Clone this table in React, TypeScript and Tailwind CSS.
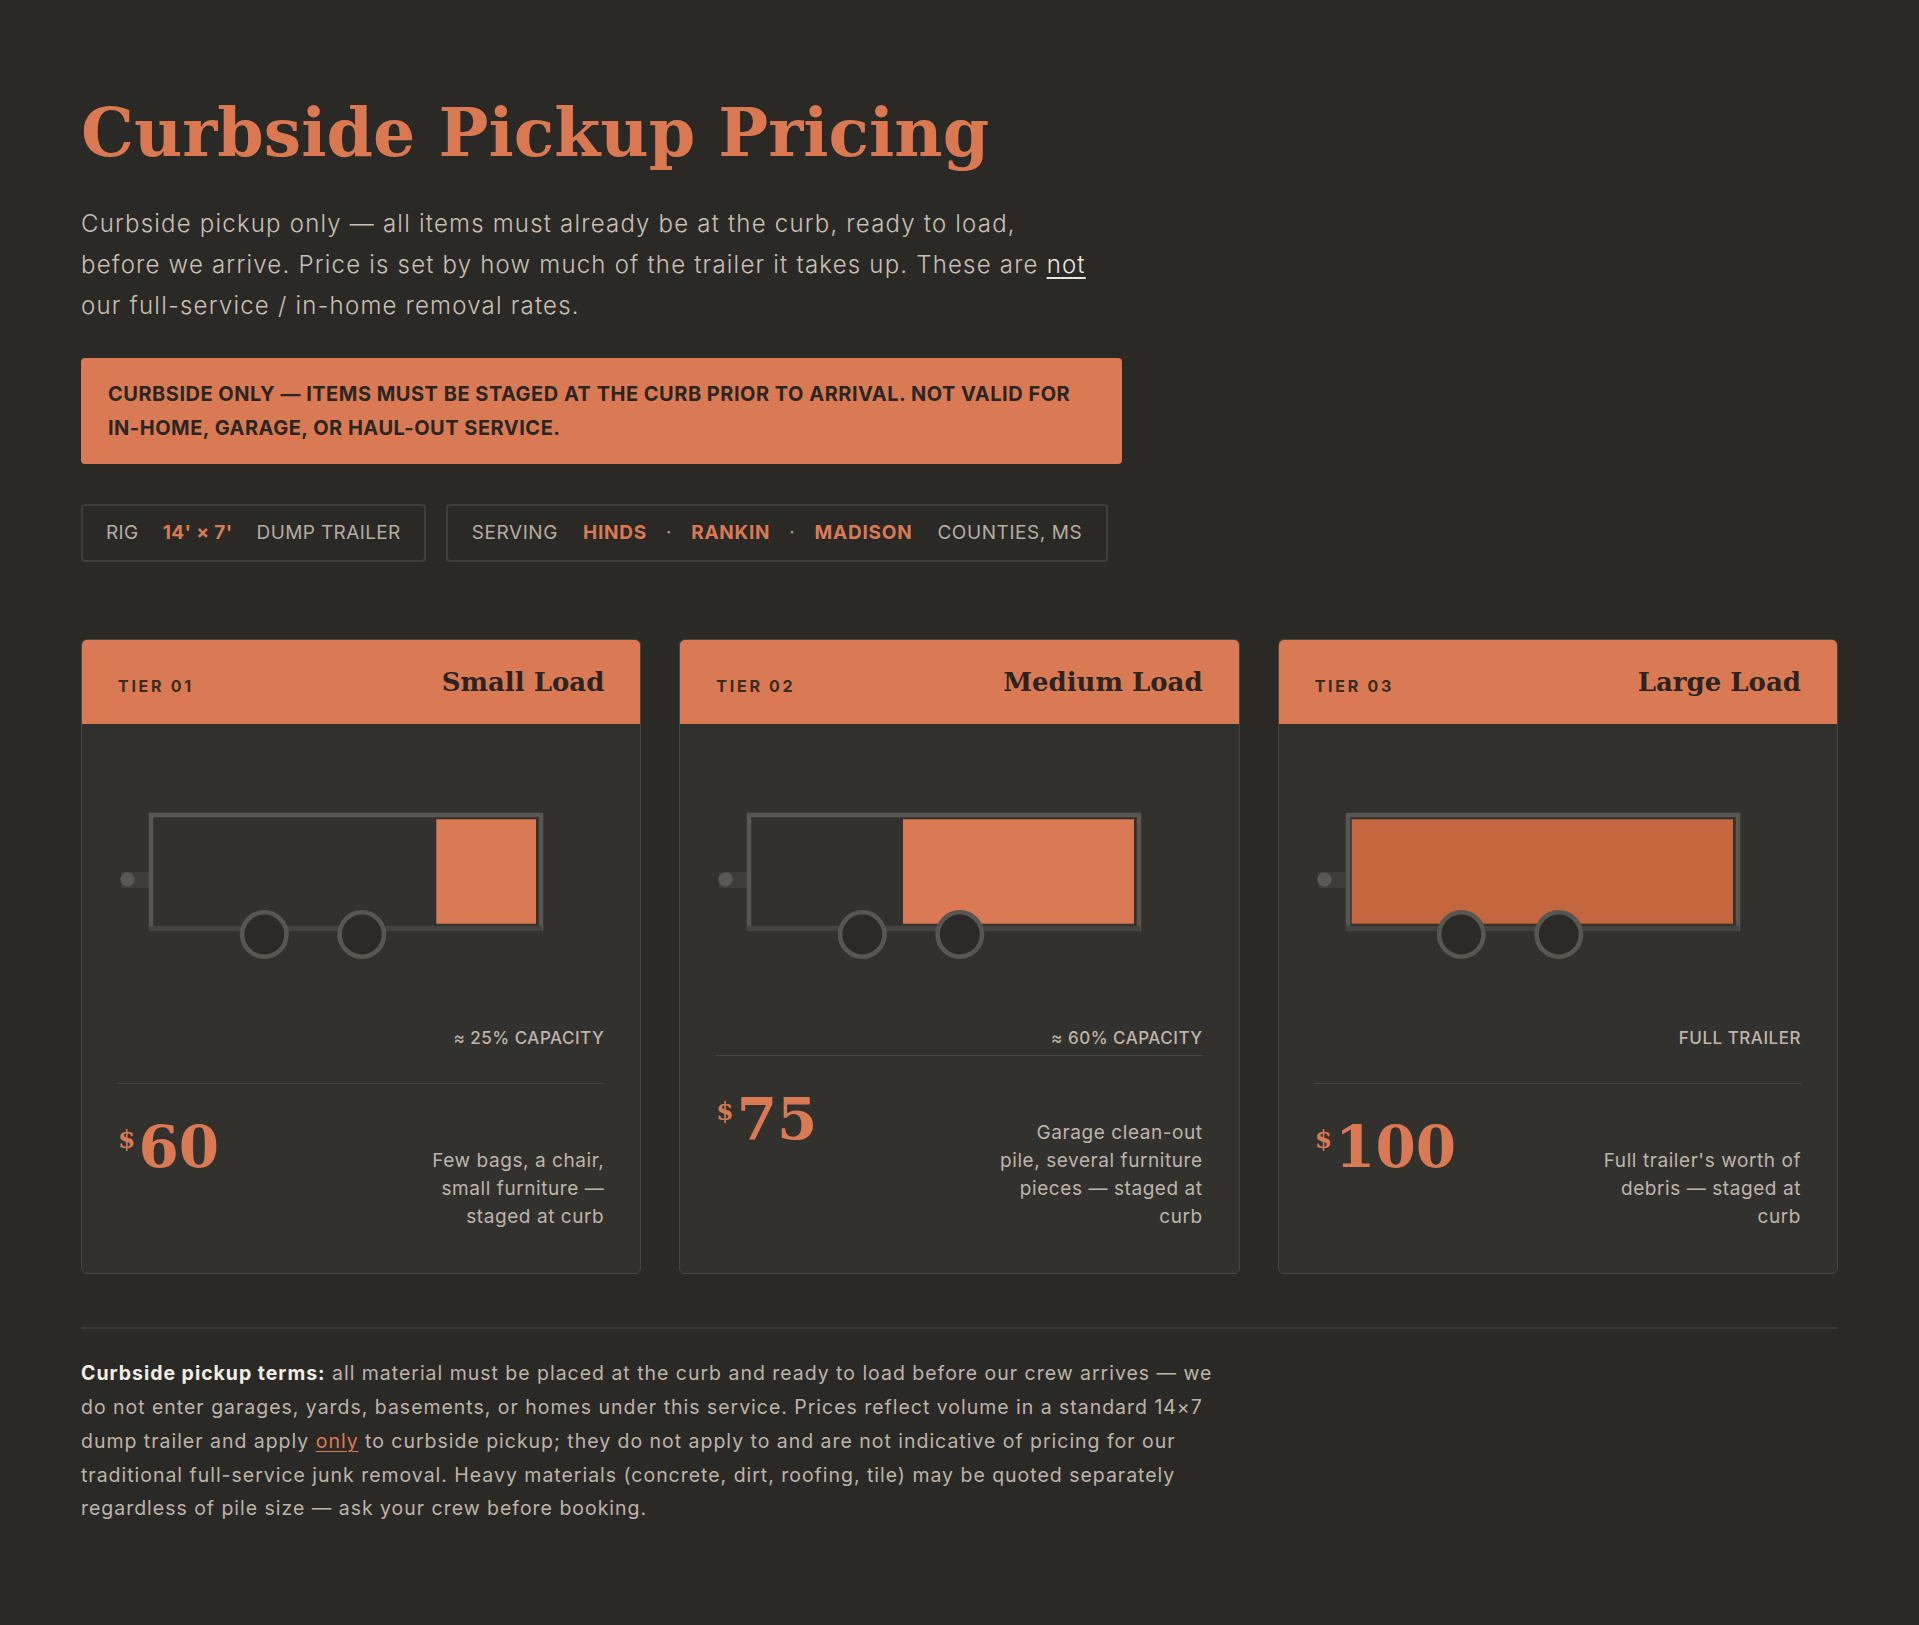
import React from "react";

const SANS = "font-['Inter','Open_Sans',sans-serif]";
const SERIF = "font-['DejaVu_Serif','Liberation_Serif',serif]";

function Trailer({ fillX, fillW, color }: { fillX: number; fillW: number; color: string }) {
  return (
    <svg width="430" height="160" viewBox="0 0 430 160" className="block">
      <rect x="3" y="72" width="30" height="16" fill="#3e3c39" />
      <circle cx="9.5" cy="79.5" r="7.2" fill="#5a5854" />
      <rect x="33" y="15" width="390" height="113.5" fill="none" stroke="#585651" strokeWidth="4.5" />
      <rect x={fillX} y="19.3" width={fillW} height="104.4" fill={color} />
      <rect x="31" y="125.8" width="393" height="5" fill="#454340" />
      <circle cx="146.3" cy="134.5" r="22.2" fill="#2b2a26" stroke="#585651" strokeWidth="4.6" />
      <circle cx="243.8" cy="134.5" r="22.2" fill="#2b2a26" stroke="#585651" strokeWidth="4.6" />
    </svg>
  );
}

type Tier = {
  tier: string;
  name: string;
  fillX: number;
  fillW: number;
  color: string;
  label: string;
  price: string;
  desc: string[];
};

const tiers: Tier[] = [
  {
    tier: "TIER 01",
    name: "Small Load",
    fillX: 318.3,
    fillW: 99.7,
    color: "#d97a55",
    label: "≈ 25% CAPACITY",
    price: "60",
    desc: ["Few bags, a chair,", "small furniture —", "staged at curb"],
  },
  {
    tier: "TIER 02",
    name: "Medium Load",
    fillX: 187,
    fillW: 231,
    color: "#d97a55",
    label: "≈ 60% CAPACITY",
    price: "75",
    desc: ["Garage clean-out", "pile, several furniture", "pieces — staged at", "curb"],
  },
  {
    tier: "TIER 03",
    name: "Large Load",
    fillX: 36.7,
    fillW: 381.3,
    color: "#c4673f",
    label: "FULL TRAILER",
    price: "100",
    desc: ["Full trailer's worth of", "debris — staged at", "curb"],
  },
];

function Card({ t }: { t: Tier }) {
  return (
    <div className="flex flex-col overflow-hidden rounded-[6px] border border-[#48453f] bg-[#33312e]">
      <div className="flex h-[84px] items-center justify-between bg-[#d97a55] px-9">
        <span className={`${SANS} relative top-[4px] text-[16px] font-bold tracking-[0.17em] text-[#3a2b23]`}>
          {t.tier}
        </span>
        <span className={`${SERIF} text-[26px] font-bold text-[#2b2420]`}>{t.name}</span>
      </div>
      <div className="flex flex-1 flex-col px-9">
        <div className="pt-[76px]">
          <Trailer fillX={t.fillX} fillW={t.fillW} color={t.color} />
        </div>
        <div
          className={`${SANS} mt-[66px] mb-[5px] text-right text-[17px] font-medium uppercase leading-6 tracking-[0.03em] text-[#beb6ac]`}
        >
          {t.label}
        </div>
        <div className="mt-auto flex items-baseline justify-between border-t border-[#4a4743] pt-[34px] pb-[42px]">
          <div className={`${SERIF} text-[58px] font-bold leading-none text-[#d97a55]`}>
            <span className="relative top-[9px] mr-[3px] align-top text-[25px]">$</span>
            {t.price}
          </div>
          <div className={`${SANS} text-right text-[19px] leading-[28px] tracking-[0.03em] text-[#bdb5ab]`}>
            {t.desc.map((d, i) => (
              <React.Fragment key={i}>
                {d}
                {i < t.desc.length - 1 && <br />}
              </React.Fragment>
            ))}
          </div>
        </div>
      </div>
    </div>
  );
}

export default function App() {
  return (
    <div className={`min-h-[1625px] w-full bg-[#2b2926] px-[81px] pt-[97px] pb-20 ${SANS}`}>
      <h1 className={`${SERIF} m-0 text-[66.5px] font-bold leading-[1.1] text-[#da7852]`}>Curbside Pickup Pricing</h1>

      <p className="mt-[33px] text-[24px] font-light leading-[41px] tracking-[0.05em] text-[#c8c0b6]">
        Curbside pickup only — all items must already be at the curb, ready to load,
        <br />
        before we arrive. Price is set by how much of the trailer it takes up. These are{" "}
        <span className="text-[#ece6de] underline decoration-[1.5px] underline-offset-[4px]">not</span>
        <br />
        our full-service / in-home removal rates.
      </p>

      <div className="mt-[32px] w-[1041px] rounded-[4px] bg-[#d97a55] px-[27px] py-[19px] text-[20px] font-bold uppercase leading-[34px] tracking-[0.025em] text-[#2b2622]">
        Curbside only — items must be staged at the curb prior to arrival. Not valid for
        <br />
        in-home, garage, or haul-out service.
      </div>

      <div className="mt-10 flex gap-[20px]">
        <div className="flex h-[58px] items-center gap-[24px] rounded-[4px] border-2 border-[#403e3a] px-[23px] text-[19px] uppercase tracking-[0.02em]">
          <span className="text-[#b5ada3]">Rig</span>
          <span className="font-bold text-[#d97a55]">14' × 7'</span>
          <span className="text-[#b5ada3]">Dump trailer</span>
        </div>
        <div className="flex h-[58px] items-center gap-[25px] rounded-[4px] border-2 border-[#403e3a] px-6 text-[19px] uppercase tracking-[0.03em]">
          <span className="text-[#b5ada3]">Serving</span>
          <span className="font-bold tracking-[0.04em] text-[#d97a55]">
            Hinds<span className="mx-[19px] font-normal text-[#a39b91]">·</span>Rankin
            <span className="mx-[19px] font-normal text-[#a39b91]">·</span>Madison
          </span>
          <span className="text-[#b5ada3]">Counties, MS</span>
        </div>
      </div>

      <div className="mt-[77px] grid grid-cols-3 gap-[38px]">
        {tiers.map((t) => (
          <Card key={t.tier} t={t} />
        ))}
      </div>

      <div className="mt-[53px] border-t-2 border-[#3b3935]" />

      <p className="mt-[28px] text-[19.5px] leading-[33.8px] tracking-[0.05em] text-[#bcb4aa]">
        <strong className="font-bold text-[#f3eee8]">Curbside pickup terms:</strong> all material must be placed at the
        curb and ready to load before our crew arrives — we
        <br />
        do not enter garages, yards, basements, or homes under this service. Prices reflect volume in a standard 14×7
        <br />
        dump trailer and apply{" "}
        <span className="text-[#d97a55] underline decoration-1 underline-offset-[3px]">only</span> to curbside pickup;
        they do not apply to and are not indicative of pricing for our
        <br />
        traditional full-service junk removal. Heavy materials (concrete, dirt, roofing, tile) may be quoted separately
        <br />
        regardless of pile size — ask your crew before booking.
      </p>
    </div>
  );
}
